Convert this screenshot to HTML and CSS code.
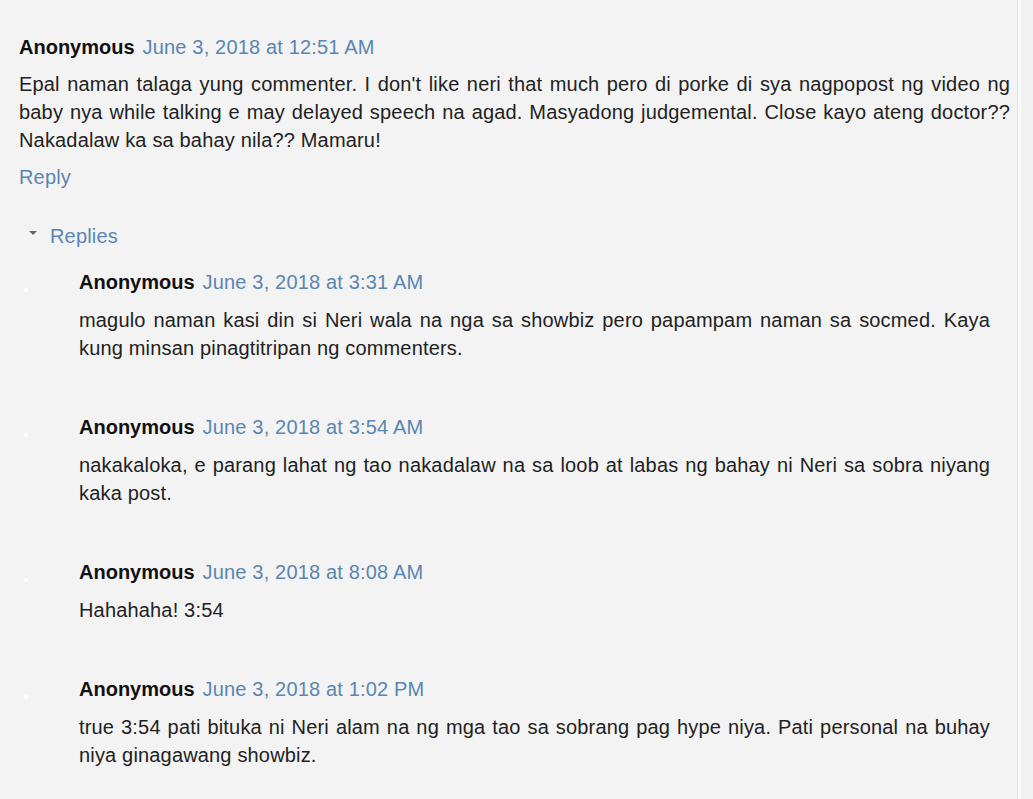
FILE: index.html
```html
<!DOCTYPE html>
<html>
<head>
<meta charset="utf-8">
<link rel="stylesheet" href="styles.css">
</head>
<body>
<div class="page">
  <div class="main">
    <div class="comment">
      <div class="head"><span class="user">Anonymous</span> <a class="date">June 3, 2018 at 12:51 AM</a></div>
      <p class="body">Epal naman talaga yung commenter. I don't like neri that much pero di porke di sya nagpopost ng video ng baby nya while talking e may delayed speech na agad. Masyadong judgemental. Close kayo ateng doctor?? Nakadalaw ka sa bahay nila?? Mamaru!</p>
      <a class="reply-link">Reply</a>
    </div>
    <div class="replies-toggle"><span class="tri"></span><a class="replies-link">Replies</a></div>
    <div class="thread">
      <div class="reply">
        <span class="avatar"></span>
        <div class="reply-content">
          <div class="head"><span class="user">Anonymous</span> <a class="date">June 3, 2018 at 3:31 AM</a></div>
          <p class="body">magulo naman kasi din si Neri wala na nga sa showbiz pero papampam naman sa socmed. Kaya kung minsan pinagtitripan ng commenters.</p>
        </div>
      </div>
      <div class="reply">
        <span class="avatar"></span>
        <div class="reply-content">
          <div class="head"><span class="user">Anonymous</span> <a class="date">June 3, 2018 at 3:54 AM</a></div>
          <p class="body">nakakaloka, e parang lahat ng tao nakadalaw na sa loob at labas ng bahay ni Neri sa sobra niyang kaka post.</p>
        </div>
      </div>
      <div class="reply">
        <span class="avatar"></span>
        <div class="reply-content">
          <div class="head"><span class="user">Anonymous</span> <a class="date">June 3, 2018 at 8:08 AM</a></div>
          <p class="body">Hahahaha! 3:54</p>
        </div>
      </div>
      <div class="reply">
        <span class="avatar"></span>
        <div class="reply-content">
          <div class="head"><span class="user">Anonymous</span> <a class="date">June 3, 2018 at 1:02 PM</a></div>
          <p class="body">true 3:54 pati bituka ni Neri alam na ng mga tao sa sobrang pag hype niya. Pati personal na buhay niya ginagawang showbiz.</p>
        </div>
      </div>
    </div>
  </div>
  <div class="edge"></div>
</div>
</body>
</html>
```
FILE: styles.css
```css
html, body {
  margin: 0;
  padding: 0;
  background: #f3f3f3;
}
body {
  font-family: "Liberation Sans", Arial, sans-serif;
  font-size: 20px;
  line-height: 28px;
  color: #222;
}
.page {
  display: flex;
  min-height: 799px;
}
.main {
  width: 1017px;
  padding-top: 33px;
  box-sizing: border-box;
}
.edge {
  flex: 1;
  border-left: 1px solid #e4e4e4;
  box-shadow: inset 3px 0 0 #fafafa;
  background: #f1f1f1;
}
.comment {
  padding: 0 7px 0 19px;
}
.head {
  display: flex;
  gap: 8px;
}
.user {
  font-weight: bold;
  color: #111;
}
.date, .reply-link, .replies-link {
  color: #5a86b2;
  text-decoration: none;
  letter-spacing: 0.17px;
}
.body {
  margin: 9px 0 0;
  text-align: justify;
  letter-spacing: 0.17px;
}
.reply-link {
  display: block;
  margin-top: 9px;
}
.replies-toggle {
  display: flex;
  align-items: center;
  margin-top: 31px;
  padding-left: 29px;
}
.tri {
  width: 0;
  height: 0;
  border-left: 4px solid transparent;
  border-right: 4px solid transparent;
  border-top: 4px solid #666;
  margin-right: 13px;
  margin-top: -7px;
}
.thread {
  display: flex;
  flex-direction: column;
  gap: 51px;
  margin-top: 18px;
}
.reply {
  display: flex;
}
.avatar {
  width: 4px;
  height: 4px;
  border-radius: 2px;
  background: #fff;
  margin: 20px 0 0 24px;
  flex: none;
}
.reply-content {
  margin-left: 51px;
  width: 911px;
}
.reply .body {
  margin-top: 10px;
}
```
